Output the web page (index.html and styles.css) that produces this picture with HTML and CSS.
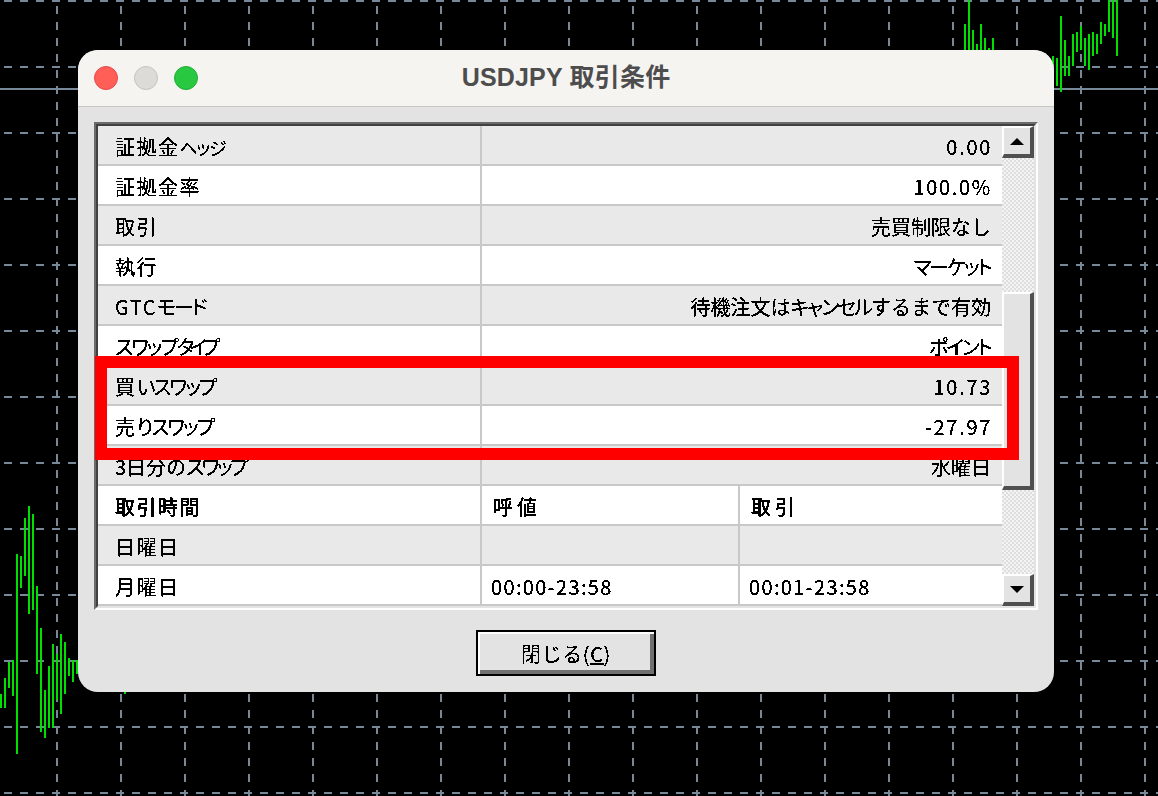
FILE: index.html
```html
<!DOCTYPE html>
<html lang="ja">
<head>
<meta charset="utf-8">
<title>USDJPY 取引条件</title>
<link rel="stylesheet" href="styles.css">
</head>
<body>
<svg class="chart" width="1158" height="796" viewBox="0 0 1158 796">
  <defs>
    <pattern id="gridv" width="64" height="16" patternUnits="userSpaceOnUse" x="56" y="6">
      <rect width="2" height="8" fill="#778899"/>
    </pattern>
    <pattern id="gridh" width="16" height="66" patternUnits="userSpaceOnUse" x="4" y="0">
      <rect width="8" height="2" fill="#778899"/>
    </pattern>
    <filter id="crisp" x="0" y="0" width="100%" height="100%" color-interpolation-filters="sRGB">
      <feComponentTransfer>
        <feFuncA type="discrete" tableValues="0 0 1 1 1 1"/>
      </feComponentTransfer>
    </filter>
  </defs>
  <rect width="1158" height="796" fill="#000"/>
  <rect width="1158" height="796" fill="url(#gridv)"/>
  <rect width="1158" height="796" fill="url(#gridh)"/>
  <rect y="88" width="1158" height="2" fill="#778899"/>
  <path fill="none" stroke="#00e000" stroke-width="2" d="M1 694V708M5 678V708M9 662V688M13 660V696M17 554V754M21 556V588M25 518V576M29 506V614M33 514V610M37 586V674M41 628V732M45 690V738M49 666V728M53 644V728M57 654V700M61 634V714M65 642V694M69 658V676M73 660V682M77 660V674M125 690V694M965 24V50M969 0V50M973 30V50M977 44V50M981 24V50M985 38V50M989 48V50M993 38V50M1053 56V66M1057 58V86M1061 16V92M1065 40V76M1069 56V76M1073 34V66M1077 32V52M1081 26V50M1085 38V66M1089 34V70M1093 32V56M1097 34V54M1101 22V44M1105 24V36M1109 0V32M1113 0V38M1117 0V56"/>
</svg>

<main class="window">
  <header class="titlebar">
    <div class="lights">
      <span class="light red"></span>
      <span class="light grey"></span>
      <span class="light green"></span>
    </div>
    <h1 class="title">USDJPY 取引条件</h1>
  </header>
  <div class="content">
    <div class="frame">
      <div class="frame-inner">
        <div class="rows">
          <div class="row alt"><div class="name">証拠金<span class="kana small">ヘッジ</span></div><div class="value num">0.00</div></div>
          <div class="row"><div class="name">証拠金率</div><div class="value num">100.0%</div></div>
          <div class="row alt"><div class="name">取引</div><div class="value">売買制限なし</div></div>
          <div class="row"><div class="name">執行</div><div class="value"><span class="kana">マーケット</span></div></div>
          <div class="row alt"><div class="name">GTC<span class="kana">モード</span></div><div class="value">待機注文は<span class="kana">キャンセル</span>するまで有効</div></div>
          <div class="row"><div class="name"><span class="kana">スワップ</span><span class="kana tight">タイプ</span></div><div class="value"><span class="kana">ポイント</span></div></div>
          <div class="row alt"><div class="name">買<span class="kana">いスワップ</span></div><div class="value num">10.73</div></div>
          <div class="row"><div class="name">売<span class="kana">りスワップ</span></div><div class="value num">-27.97</div></div>
          <div class="row alt"><div class="name plain">3日分の<span class="kana">スワップ</span></div><div class="value">水曜日</div></div>
          <div class="row three head"><div class="name">取引時間</div><div class="cell">呼値</div><div class="cell">取引</div></div>
          <div class="row three alt"><div class="name">日曜日</div><div class="cell"></div><div class="cell"></div></div>
          <div class="row three"><div class="name">月曜日</div><div class="cell num">00:00-23:58</div><div class="cell num">00:01-23:58</div></div>
        </div>
        <div class="scrollbar">
          <div class="sb-btn"><svg width="14" height="7" viewBox="0 0 14 7"><path d="M7 0 14 7H0Z" fill="#000"/></svg></div>
          <div class="sb-track upper"></div>
          <div class="sb-thumb"></div>
          <div class="sb-track lower"></div>
          <div class="sb-btn"><svg width="14" height="7" viewBox="0 0 14 7"><path d="M0 0H14L7 7Z" fill="#000"/></svg></div>
        </div>
      </div>
    </div>
    <div class="actions">
      <button class="close" type="button"><span class="close-label">閉じる(<u>C</u>)</span></button>
    </div>
  </div>
  <div class="highlight"></div>
</main>
</body>
</html>
```

FILE: styles.css
```css
* { box-sizing: border-box; }
html, body { margin: 0; padding: 0; }
body {
  position: relative;
  width: 1158px;
  height: 796px;
  overflow: hidden;
  background: #000;
  font-family: "Noto Sans CJK JP", "Liberation Sans", sans-serif;
}
.chart { position: absolute; left: 0; top: 0; display: block; }

.window {
  position: absolute;
  left: 78px;
  top: 50px;
  width: 976px;
  height: 642px;
  background: #e3e3e3;
  border-radius: 20px;
  overflow: hidden;
}
.titlebar {
  position: relative;
  display: flex;
  align-items: center;
  justify-content: center;
  height: 57px;
  padding-bottom: 3px;
  background: #f5f4f1;
  border-bottom: 1px solid #c8c7c4;
}
.lights {
  position: absolute;
  left: 16px;
  top: 16px;
  display: flex;
  gap: 16px;
}
.light {
  width: 24px;
  height: 24px;
  border-radius: 50%;
  border: 1px solid;
}
.red { background: #ff5f57; border-color: #e5484a; }
.grey { background: #dcdbd7; border-color: #c4c3bf; }
.green { background: #28c840; border-color: #1fad33; }
.title {
  margin: 0;
  font-family: "Liberation Sans", "Noto Sans CJK JP", sans-serif;
  font-size: 25px;
  font-weight: 700;
  letter-spacing: .2px;
  color: #4d4d4d;
  line-height: 28px;
}

.content { padding: 15px 16px 16px; }
.frame {
  border: 2px solid;
  border-color: #6b6b6b #fff #fff #6b6b6b;
}
.frame-inner {
  display: flex;
  height: 484px;
  border: 2px solid;
  border-color: #404040 #e3e3e3 #e3e3e3 #404040;
}
.rows { width: 904px; background: #fff; }
.row {
  display: grid;
  grid-template-columns: 384px 1fr;
  height: 40px;
  background: #fff;
  border-bottom: 2px solid #c8c8c8;
  font-size: 20px;
  line-height: 35px;
  color: #000;
  font-weight: 400;
}
.row.alt { background: #e9e9e9; }
.row.three { grid-template-columns: 384px 258px 1fr; }
.row.head { font-weight: 500; letter-spacing: 4px; }
.name, .value, .cell {
  padding-top: 3px;
  white-space: nowrap;
  filter: url(#crisp);
}
.name {
  padding-left: 17px;
  border-right: 2px solid #c8c8c8;
  letter-spacing: 1.5px;
  overflow: hidden;
}
.name.plain { letter-spacing: 0; }
.value {
  padding-right: 11px;
  text-align: right;
}
.cell { padding-left: 9px; }
.head .cell { padding-left: 11px; }
.cell:nth-child(2) { border-right: 2px solid #c8c8c8; }
.num { letter-spacing: 1.7px; }
.cell.num { letter-spacing: 1.35px; }
.value.num { padding-right: 10px; }
.kana { letter-spacing: -2px; font-feature-settings: "palt"; }
.name.plain .kana { letter-spacing: -2.5px; }
.kana.tight { letter-spacing: -5px; }
.kana.small { font-size: 18px; letter-spacing: -1.5px; }

.scrollbar {
  display: flex;
  flex-direction: column;
  width: 32px;
  height: 480px;
  background-color: #e9e9e9;
}
.sb-btn, .sb-thumb {
  background: #e3e3e3;
  border-style: solid;
  border-width: 2px 4px 4px 2px;
  border-color: #fff #505050 #505050 #fff;
}
.sb-btn {
  display: flex;
  align-items: center;
  justify-content: center;
  height: 32px;
  flex: none;
}
.sb-thumb { height: 198px; flex: none; }
.sb-track {
  background-color: #f4f4f4;
  background-image:
    linear-gradient(45deg, #dedede 25%, transparent 25%, transparent 75%, #dedede 75%),
    linear-gradient(45deg, #dedede 25%, transparent 25%, transparent 75%, #dedede 75%);
  background-size: 4px 4px;
  background-position: 0 0, 2px 2px;
}
.sb-track.upper { height: 134px; flex: none; }
.sb-track.lower { flex: 1; }

.actions {
  display: flex;
  justify-content: center;
  margin-top: 20px;
}
.close {
  width: 180px;
  height: 46px;
  padding: 0;
  background: #e3e3e3;
  border: 2px solid #000;
  box-shadow: inset 2px 2px 0 #fff, inset -4px -4px 0 #707070;
  font-family: "Noto Sans CJK JP", "Liberation Sans", sans-serif;
  font-size: 20px;
  font-weight: 400;
  color: #000;
}
.close-label {
  display: inline-block;
  letter-spacing: .6px;
  filter: url(#crisp);
}

.highlight {
  position: absolute;
  left: 17px;
  top: 306px;
  width: 924px;
  height: 104px;
  border: 12px solid #f00;
}
```
